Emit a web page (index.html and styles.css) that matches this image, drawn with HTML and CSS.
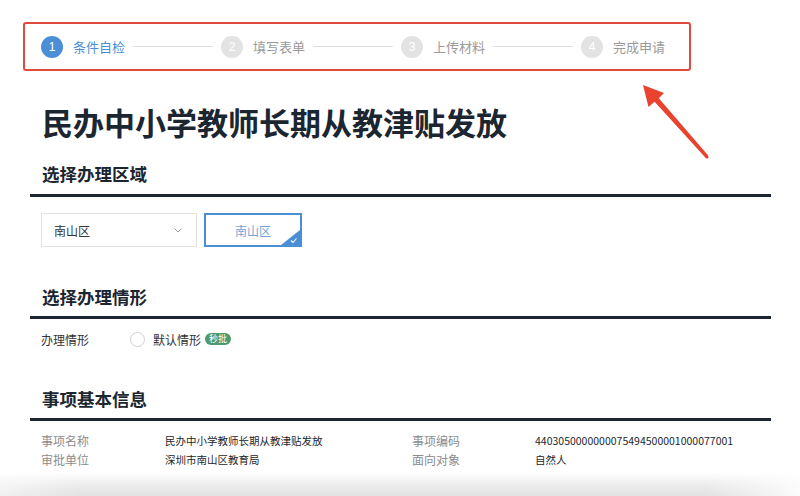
FILE: index.html
```html
<!DOCTYPE html>
<html lang="zh">
<head>
<meta charset="utf-8">
<title>民办中小学教师长期从教津贴发放</title>
<link rel="stylesheet" href="styles.css">
</head>
<body>
<div class="page">
  <div class="steps">
    <div class="step active"><span class="num">1</span><span class="label">条件自检</span></div>
    <span class="line"></span>
    <div class="step"><span class="num">2</span><span class="label">填写表单</span></div>
    <span class="line"></span>
    <div class="step"><span class="num">3</span><span class="label">上传材料</span></div>
    <span class="line"></span>
    <div class="step"><span class="num">4</span><span class="label">完成申请</span></div>
  </div>

  <svg class="arrow" width="800" height="200" viewBox="0 0 800 200">
    <polygon points="643,85 664,93 658.8,98.2 708.2,155.6 706,158.2 654.6,101.8 648.5,107" fill="#e8432f"/>
    <circle cx="707" cy="157" r="1.6" fill="#e8432f"/>
  </svg>

  <div class="main">
    <h1 class="title">民办中小学教师长期从教津贴发放</h1>

    <h2 class="sec sec-first">选择办理区域</h2>
    <div class="region-row">
      <div class="select">
        <span>南山区</span>
        <svg class="chev" width="8" height="5" viewBox="0 0 8 5"><polyline points="0.5,0.5 4,4 7.5,0.5" fill="none" stroke="#9a9a9a" stroke-width="1"/></svg>
      </div>
      <div class="choice">
        <span>南山区</span>
        <svg class="corner" width="19" height="15" viewBox="0 0 19 15">
          <polygon points="19,0 19,15 0,15" fill="#4a8fd6"/>
          <polyline points="10,10.5 12,12.5 15.5,8.5" fill="none" stroke="#fff" stroke-width="1.1"/>
        </svg>
      </div>
    </div>

    <h2 class="sec">选择办理情形</h2>
    <div class="case-row">
      <span class="case-label">办理情形</span>
      <span class="radio"></span>
      <span class="case-text">默认情形</span>
      <span class="badge">秒批</span>
    </div>

    <h2 class="sec">事项基本信息</h2>
    <div class="info">
      <span class="k">事项名称</span><span class="v">民办中小学教师长期从教津贴发放</span>
      <span class="k">事项编码</span><span class="v">4403050000000075494500001000077001</span>
      <span class="k">审批单位</span><span class="v">深圳市南山区教育局</span>
      <span class="k">面向对象</span><span class="v">自然人</span>
    </div>
  </div>
  <div class="fade"></div>
</div>
</body>
</html>
```

FILE: styles.css
```css
* { box-sizing: border-box; }
html, body {
  margin: 0;
  padding: 0;
  height: 496px;
  overflow: hidden;
  background: #fff;
}
body {
  font-family: "Noto Sans CJK SC", "Noto Sans", sans-serif;
  color: #1f2933;
}
.page {
  position: relative;
  height: 496px;
  padding-top: 22px;
}

/* steps */
.steps {
  margin-left: 23px;
  width: 668px;
  height: 49px;
  border: 2px solid #e04a3c;
  border-radius: 3px;
  display: flex;
  align-items: center;
  padding-left: 16px;
}
.step {
  display: flex;
  align-items: center;
  gap: 10px;
}
.num {
  width: 22px;
  height: 22px;
  border-radius: 50%;
  background: #e3e3e3;
  color: #fff;
  font-size: 12px;
  line-height: 22px;
  text-align: center;
  font-family: "Liberation Sans", sans-serif;
}
.label {
  font-size: 13px;
  line-height: 20px;
  color: #9a9a9a;
  width: 52px;
}
.step.active .num { background: #4a8fd6; }
.step.active .label { color: #4a8fd6; }
.line {
  width: 80px;
  height: 1px;
  background: #dcdcdc;
  margin: 0 8px;
}

.arrow {
  position: absolute;
  left: 0;
  top: 0;
}

/* main */
.main {
  margin-left: 30px;
  width: 741px;
}
.title {
  margin: 31px 0 0 12px;
  font-size: 31px;
  line-height: 40px;
  font-weight: 700;
  color: #1c2631;
}
.sec {
  margin: 37px 0 0;
  padding: 0 0 6px 12px;
  font-size: 17.5px;
  line-height: 26px;
  font-weight: 600;
  color: #1c2631;
  border-bottom: 3px solid #1d2630;
}
.sec-first {
  margin-top: 19px;
  padding-bottom: 7px;
}

.region-row {
  display: flex;
  gap: 7px;
  margin: 16px 0 0 11px;
}
.select {
  width: 156px;
  height: 34px;
  border: 1px solid #e2e2e2;
  display: flex;
  align-items: center;
  justify-content: space-between;
  padding: 0 14px 0 12px;
  font-size: 12px;
  color: #333;
}
.choice {
  position: relative;
  width: 98px;
  height: 34px;
  border: 2px solid #4a8fd6;
  display: flex;
  align-items: center;
  justify-content: center;
  font-size: 12px;
  color: #72a3d8;
}
.corner {
  position: absolute;
  right: 0;
  bottom: 0;
}

.case-row {
  display: flex;
  align-items: center;
  margin: 10px 0 0 11px;
  height: 20px;
  font-size: 12px;
}
.case-label {
  width: 89px;
  color: #333;
}
.radio {
  width: 15px;
  height: 15px;
  border: 1px solid #cfcfcf;
  border-radius: 50%;
  margin-right: 8px;
}
.case-text { color: #333; }
.badge {
  margin-left: 4px;
  height: 12px;
  padding: 0 4px;
  border-radius: 6px;
  background: #4e9a70;
  color: #fff;
  font-size: 9px;
  line-height: 12px;
}

.info {
  margin: 10px 0 0 11px;
  display: grid;
  grid-template-columns: 124px 247px 123px auto;
  grid-auto-rows: 19px;
  align-items: center;
}
.k {
  font-size: 12px;
  color: #8c8c8c;
}
.v {
  font-size: 10.5px;
  color: #22272d;
  font-weight: 400;
}

.fade {
  margin-top: 3px;
  height: 26px;
  background:
    linear-gradient(to right, rgba(255,255,255,0.5) 0%, rgba(255,255,255,0) 10%, rgba(255,255,255,0) 88%, rgba(255,255,255,0.85) 100%),
    linear-gradient(to bottom, #ffffff 0%, #ececec 50%, #e0e0e0 100%);
}
```
